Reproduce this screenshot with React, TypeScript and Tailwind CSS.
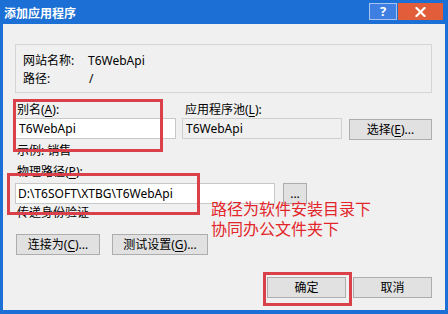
import React from "react";

const U = ({ c }: { c: string }) => <span className="underline underline-offset-[2px]">{c}</span>;

const Btn = ({ w, children }: { w: string; children: React.ReactNode }) => (
  <div className={`${w} h-[21px] flex items-center justify-center border border-[#adadad] bg-[#e1e1e1] text-[12px] leading-[16px] text-black`}>
    {children}
  </div>
);

export default function App() {
  return (
    <div
      className="relative w-[448px] h-[314px] bg-[#1c6fd4] flex flex-col overflow-hidden"
      style={{ fontFamily: '"Noto Sans", "Noto Sans CJK SC", sans-serif' }}
    >
      {/* Title bar */}
      <div className="h-[24px] flex items-start pl-[4px] pr-[5px] shrink-0">
        <div
          className="mt-[5px] text-[12px] leading-[16px] font-bold text-white"
          style={{ fontFamily: '"Noto Sans CJK SC", sans-serif' }}
        >
          添加应用程序
        </div>
        <div className="ml-auto mt-[3px] flex gap-[1px]">
          <div className="w-[28px] h-[17px] bg-[#3f7fe2] border border-[#a8c4f0] flex items-center justify-center text-white text-[13px] font-bold leading-none">
            ?
          </div>
          <div className="w-[45px] h-[17px] bg-[#e25e3a] flex items-center justify-center">
            <svg width="11" height="10" viewBox="0 0 11 10">
              <path d="M1.5 1 L9.5 9 M9.5 1 L1.5 9" stroke="white" strokeWidth="2.2" strokeLinecap="square" />
            </svg>
          </div>
        </div>
      </div>

      {/* Body */}
      <div className="flex-1 mx-[3px] mb-[4px] bg-[#f0f0f0] flex flex-col pl-[12px] pr-[13px] text-[12px] leading-[16px] text-black">
        {/* Group box */}
        <div className="mt-[20px] h-[49px] border border-[#d5d5d5] pt-[7px] pl-[7px]">
          <div className="flex h-[18px] items-center">
            <div className="w-[65px]">网站名称:</div>
            <div>T6WebApi</div>
          </div>
          <div className="flex h-[18px] items-center">
            <div className="w-[65px]">路径:</div>
            <div className="pl-[1px]">/</div>
          </div>
        </div>

        {/* Alias / app pool row */}
        <div className="mt-[9px] flex">
          <div className="w-[161px] flex flex-col">
            <div className="pl-[2px]">别名(<U c="A" />):</div>
            <div className="h-[21px] border border-[#c8c8c8] bg-white flex items-center pl-[3px]">T6WebApi</div>
          </div>
          <div className="ml-[6px] w-[160px] flex flex-col">
            <div className="pl-[3px]">应用程序池(<U c="L" />):</div>
            <div className="h-[21px] border border-[#cfcfcf] bg-[#f0f0f0] flex items-center pl-[3px]">T6WebApi</div>
          </div>
          <div className="ml-[7px] mt-[17px]">
            <Btn w="w-[83px]">
              选择(<U c="E" />)...
            </Btn>
          </div>
        </div>

        <div className="mt-[3px] pl-[2px]">示例: 销售</div>

        <div className="mt-[5px] pl-[2px]">物理路径(<U c="P" />):</div>
        <div className="mt-[3px] flex">
          <div className="w-[260px] h-[21px] border border-[#c8c8c8] bg-white flex items-center pl-[2px]">
            D:\T6SOFT\XTBG\T6WebApi
          </div>
          <div className="ml-[8px]">
            <Btn w="w-[24px]">...</Btn>
          </div>
        </div>
        <div className="mt-[1px] pl-[2px]">传递身份验证</div>

        <div className="mt-[13px] flex gap-[12px] pl-[1px]">
          <Btn w="w-[84px]">
            连接为(<U c="C" />)...
          </Btn>
          <Btn w="w-[96px]">
            测试设置(<U c="G" />)...
          </Btn>
        </div>

        <div className="mt-[22px] flex justify-end gap-[7px]">
          <Btn w="w-[79px]">确定</Btn>
          <Btn w="w-[79px]">取消</Btn>
        </div>
      </div>

      {/* Annotations */}
      <div className="absolute left-[13px] top-[99px] w-[150px] h-[53px] border-[3px] border-[#d9404a]" />
      <div className="absolute left-[7px] top-[173px] w-[193px] h-[42px] border-[3px] border-[#d9404a]" />
      <div className="absolute left-[263px] top-[272px] w-[89px] h-[34px] border-[3px] border-[#d9404a]" />
      <div
        className="absolute left-[211px] top-[198px] text-[16px] leading-[20px] text-[#e3262b]"
        style={{ fontFamily: '"Noto Sans CJK SC", sans-serif' }}
      >
        <div>路径为软件安装目录下</div>
        <div>协同办公文件夹下</div>
      </div>
    </div>
  );
}
